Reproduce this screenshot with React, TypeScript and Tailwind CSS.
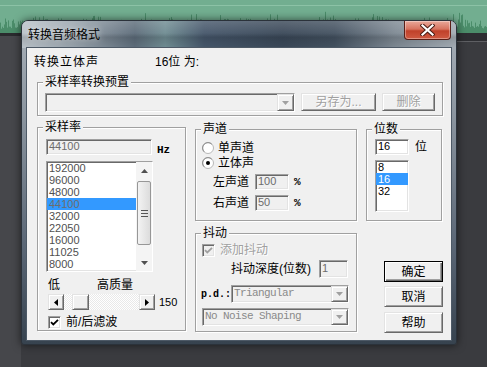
import React from 'react';

const SUNKEN =
  'border border-t-[#a0a0a0] border-l-[#a0a0a0] border-r-white border-b-white shadow-[inset_1px_1px_0_#696969,inset_-1px_-1px_0_#e3e3e3]';
const RAISED =
  'border border-t-[#e3e3e3] border-l-[#e3e3e3] border-r-[#696969] border-b-[#696969] shadow-[inset_1px_1px_0_#fff,inset_-1px_-1px_0_#a0a0a0]';
const MONO = "font-['Liberation_Mono',monospace]";

type Dir = 'up' | 'down' | 'left' | 'right';

const Arrow = ({ dir, color = '#000' }: { dir: Dir; color?: string }) => {
  const paths: Record<Dir, string> = {
    down: 'M0 0H7L3.5 4Z',
    up: 'M0 4H7L3.5 0Z',
    left: 'M4 0V7L0 3.5Z',
    right: 'M0 0V7L4 3.5Z',
  };
  const flat = dir === 'up' || dir === 'down';
  const w = flat ? 7 : 4;
  const h = flat ? 4 : 7;
  return (
    <svg width={w} height={h} viewBox={`0 0 ${w} ${h}`}>
      <path d={paths[dir]} fill={color} />
    </svg>
  );
};

const Group = ({
  label,
  className,
  children,
}: {
  label: string;
  className: string;
  children?: React.ReactNode;
}) => (
  <div className={`relative border border-[#a0a0a0] shadow-[inset_1px_1px_0_#fff,1px_1px_0_#fff] ${className}`}>
    <span className="absolute left-[5px] top-[-8px] bg-[#f0f0f0] px-[2px] text-[12px] leading-[14px]">{label}</span>
    {children}
  </div>
);

const Combo = ({ text, className }: { text?: string; className: string }) => (
  <div className={`${SUNKEN} flex items-stretch bg-[#f0f0f0] ${className}`}>
    <div className={`flex-1 pl-[2px] text-[11px] leading-[14px] tracking-[-0.6px] text-[#8a8a8a] ${MONO}`}>{text}</div>
    <div className={`${RAISED} flex w-[17px] items-center justify-center bg-[#f0f0f0]`}>
      <Arrow dir="down" color="#a0a0a0" />
    </div>
  </div>
);

const Edit = ({ text, className, enabled }: { text: string; className: string; enabled?: boolean }) => (
  <div
    className={`${SUNKEN} pl-[2px] text-[11px] leading-[13px] ${
      enabled ? 'bg-white text-black' : 'bg-[#f0f0f0] text-[#6d6d6d]'
    } ${className}`}
  >
    {text}
  </div>
);

const Check = ({ disabled }: { disabled?: boolean }) => (
  <div
    className={`${SUNKEN} flex h-[13px] w-[13px] shrink-0 items-center justify-center ${
      disabled ? 'bg-[#f0f0f0]' : 'bg-white'
    }`}
  >
    <svg width="9" height="9" viewBox="0 0 9 9">
      <path d="M1 4.2L3.3 6.5L8 1.8" stroke={disabled ? '#a0a0a0' : '#000'} strokeWidth="1.8" fill="none" />
    </svg>
  </div>
);

const Radio = ({ on }: { on?: boolean }) => (
  <svg width="12" height="12" viewBox="0 0 12 12" className="shrink-0">
    <circle cx="6" cy="6" r="5.5" fill="#fff" stroke="#b8b8b8" />
    <path d="M2.2 9.8A5.3 5.3 0 0 1 9.8 2.2" stroke="#8a8a8a" fill="none" />
    {on && <circle cx="6" cy="6" r="2" fill="#000" />}
  </svg>
);

const ScrollBar = () => (
  <div className="flex w-[16px] flex-col bg-[#f4f4f4]">
    <div className="flex h-[17px] items-center justify-center">
      <Arrow dir="up" color="#505050" />
    </div>
    <div className="mx-[1px] mt-[2px] flex h-[64px] flex-col items-center justify-center gap-[2px] rounded-[2px] border border-[#979797] bg-[linear-gradient(90deg,#f3f3f3,#dcdcdc)]">
      <div className="h-px w-[7px] bg-[#555]" />
      <div className="h-px w-[7px] bg-[#555]" />
      <div className="h-px w-[7px] bg-[#555]" />
    </div>
    <div className="flex-1" />
    <div className="flex h-[17px] items-center justify-center">
      <Arrow dir="down" color="#505050" />
    </div>
  </div>
);

const rates = ['192000', '96000', '48000', '44100', '32000', '22050', '16000', '11025', '8000'];
const bits = ['8', '16', '32'];

const Button = ({ label, disabled, primary, className }: { label: string; disabled?: boolean; primary?: boolean; className: string }) => (
  <div
    className={`flex items-center justify-center bg-[#f0f0f0] text-[12px] leading-[14px] ${
      primary
        ? 'border border-black shadow-[inset_1px_1px_0_#fff,inset_-1px_-1px_0_#696969,inset_-2px_-2px_0_#a0a0a0]'
        : RAISED
    } ${disabled ? 'text-[#a0a0a0] [text-shadow:1px_1px_0_#fff]' : 'text-black'} ${className}`}
  >
    {label}
  </div>
);

const Wave = () => {
  let seed = 11;
  const rnd = () => {
    seed = (seed * 9301 + 49297) % 233280;
    return seed / 233280;
  };
  let d = '';
  for (let x = 0; x < 487; x++) {
    const env = Math.abs(Math.sin(x / 19) * 0.6 + Math.sin(x / 5.3) * 0.4);
    const h = rnd() < 0.3 ? 4 + rnd() * 3 : 5 + rnd() * 17 * (0.35 + 0.65 * env);
    d += `M${x + 0.5} 33V${(33 - h).toFixed(1)}`;
  }
  return (
    <svg width="487" height="33" viewBox="0 0 487 33" className="block">
      <rect x="0" y="5" width="487" height="1" fill="#8cc2a6" />
      <path d={d} stroke="#4b8d6a" strokeWidth="1" />
    </svg>
  );
};

export default function App() {
  return (
    <div className="relative flex h-[367px] w-[487px] flex-col overflow-hidden bg-[#3c3d41] font-['Liberation_Sans','Noto_Sans_CJK_SC',sans-serif] text-black">
      {/* desktop behind the dialog */}
      <div className="h-[33px] bg-[#72ae90]">
        <Wave />
      </div>
      <div className="flex flex-1">
        <div className="w-[21px] border-t-[3px] border-[#2a2b2e] bg-[#46474b]" />
        <div className="flex flex-1 flex-col">
          <div className="h-[8px] bg-[#2d2e32]" />
          <div className="h-px bg-[#5e5f63]" />
          <div className="flex-1 bg-[#3a3b3f]" />
        </div>
      </div>

      {/* dialog window */}
      <div className="absolute left-[21px] top-[20px] flex h-[325px] w-[436px] flex-col rounded-t-[7px] rounded-b-[3px] border border-[#2b323a] bg-[linear-gradient(180deg,#a9b1b9_0%,#8a949e_30%,#5a6675_70%,#37434f_100%)] shadow-[0_0_8px_rgba(0,0,0,0.6)]">
        <div className="flex h-[27px] items-start justify-between rounded-t-[6px] bg-[image:linear-gradient(180deg,rgba(255,255,255,0.18)_0%,rgba(255,255,255,0.05)_45%,rgba(0,0,0,0.12)_60%,rgba(0,0,0,0)_100%),linear-gradient(90deg,#bac2c9_0%,#97a2ab_12%,#5d6c7a_26%,#6f8c92_33%,#45566a_42%,#3a4858_60%,#435160_72%,#7e8993_86%,#a3acb4_100%)]">
          <div className="pl-[6px] pt-[7px] text-[12px] leading-[14px] [text-shadow:0_0_6px_rgba(255,255,255,0.9)]">转换音频格式</div>
          <div className="mr-[5px] flex h-[19px] w-[47px] items-center justify-center rounded-b-[4px] border border-t-0 border-[#5a1f17] bg-[linear-gradient(180deg,#e9a89a_0%,#d7735f_45%,#c0412a_55%,#cf5a42_100%)] shadow-[inset_0_0_0_1px_rgba(255,255,255,0.35)]">
            <svg width="15" height="12" viewBox="0 0 15 12">
              <path d="M2.5 1.5L12.5 10.5M12.5 1.5L2.5 10.5" stroke="#4a1c14" strokeWidth="4.2" strokeLinecap="square" />
              <path d="M2.5 1.5L12.5 10.5M12.5 1.5L2.5 10.5" stroke="#fff" strokeWidth="2.2" strokeLinecap="square" />
            </svg>
          </div>
        </div>

        <div className="mx-[5px] h-[292px] bg-[#f0f0f0] pt-[7px] shadow-[0_0_0_1px_#4d5966]">
          <div className="flex h-[14px] pl-[7px] text-[12px] leading-[14px]">
            <span className="w-[121px] tracking-[1px]">转换立体声</span>
            <span>16位 为:</span>
          </div>

          <Group label="采样率转换预置" className="ml-[10px] mt-[13px] h-[34px] w-[406px]">
            <div className="flex gap-[6px] pl-[7px] pt-[10px]">
              <Combo className="h-[19px] w-[250px]" />
              <Button label="另存为..." disabled className="h-[18px] w-[75px]" />
              <Button label="删除" disabled className="h-[18px] w-[53px]" />
            </div>
          </Group>

          <div className="mt-[11px] flex items-start pl-[10px]">
            {/* sample rate */}
            <Group label="采样率" className="h-[204px] w-[149px]">
              <div className="ml-[8px] mt-[11px] flex h-[16px] items-center">
                <Edit text="44100" className="h-[16px] w-[106px]" />
                <span className={`ml-[5px] translate-y-[3px] text-[11px] font-bold leading-[13px] ${MONO}`}>Hz</span>
              </div>
              <div className={`${SUNKEN} ml-[8px] mt-[6px] flex h-[111px] w-[107px] bg-white`}>
                <div className="flex-1">
                  {rates.map((r, i) => (
                    <div
                      key={r}
                      className={`h-[12px] pl-[2px] text-[11px] leading-[12px] ${
                        i === 3 ? 'bg-[#3399ff] text-[#6d6d6d]' : 'text-[#505050]'
                      }`}
                    >
                      {r}
                    </div>
                  ))}
                </div>
                <ScrollBar />
              </div>
              <div className="mt-[6px] flex h-[14px] pl-[10px] text-[12px] leading-[14px]">
                <span className="w-[49px]">低</span>
                <span>高质量</span>
              </div>
              <div className="ml-[10px] mt-[2px] flex h-[16px] items-center">
                <div className={`${RAISED} flex h-[16px] w-[16px] items-center justify-center bg-[#f0f0f0]`}>
                  <Arrow dir="left" />
                </div>
                <div className="flex h-[16px] w-[75px] bg-[image:repeating-conic-gradient(#fff_0_25%,#e9e9e9_0_50%)] bg-[length:2px_2px]">
                  <div className={`${RAISED} ml-[8px] h-[16px] w-[17px] bg-[#f0f0f0]`} />
                </div>
                <div className={`${RAISED} flex h-[16px] w-[16px] items-center justify-center bg-[#f0f0f0]`}>
                  <Arrow dir="right" />
                </div>
                <span className="ml-[4px] text-[11px] leading-[13px]">150</span>
              </div>
              <div className="ml-[10px] mt-[5px] flex items-center">
                <Check />
                <span className="ml-[5px] text-[12px] leading-[14px]">前/后滤波</span>
              </div>
            </Group>

            {/* channels + dither */}
            <div className="ml-[9px] flex w-[162px] flex-col">
              <Group label="声道" className="mt-[2px] h-[92px]">
                <div className="mt-[11px] flex h-[14px] items-center gap-[4px] pl-[6px] text-[12px] leading-[14px]">
                  <Radio />
                  <span>单声道</span>
                </div>
                <div className="mt-[1px] flex h-[14px] items-center gap-[4px] pl-[6px] text-[12px] leading-[14px]">
                  <Radio on />
                  <span>立体声</span>
                </div>
                <div className="mt-[4px] flex h-[16px] items-center pl-[17px] text-[12px] leading-[14px]">
                  <span className="w-[42px]">左声道</span>
                  <Edit text="100" className="h-[16px] w-[34px]" />
                  <span className={`ml-[5px] text-[11px] font-bold ${MONO}`}>%</span>
                </div>
                <div className="mt-[5px] flex h-[16px] items-center pl-[17px] text-[12px] leading-[14px]">
                  <span className="w-[42px]">右声道</span>
                  <Edit text="50" className="h-[16px] w-[34px]" />
                  <span className={`ml-[5px] text-[11px] font-bold ${MONO}`}>%</span>
                </div>
              </Group>

              <Group label="抖动" className="mt-[12px] h-[99px]">
                <div className="mt-[9px] flex items-center pl-[6px]">
                  <Check disabled />
                  <span className="ml-[5px] text-[12px] leading-[14px] text-[#a0a0a0] [text-shadow:1px_1px_0_#fff]">添加抖动</span>
                </div>
                <div className="mt-[3px] flex h-[18px] items-center pl-[35px]">
                  <span className="w-[88px] text-[12px] leading-[14px]">抖动深度(位数)</span>
                  <Edit text="1" className="h-[18px] w-[29px] leading-[15px]" />
                </div>
                <div className="mt-[7px] flex h-[18px] items-center pl-[5px]">
                  <span className={`w-[30px] text-[10px] font-bold ${MONO}`}>p.d.:</span>
                  <Combo text="Triangular" className="h-[18px] w-[118px]" />
                </div>
                <div className="mt-[5px] pl-[6px]">
                  <Combo text="No Noise Shaping" className="h-[18px] w-[147px]" />
                </div>
              </Group>
            </div>

            {/* bit depth + buttons */}
            <div className="ml-[9px] flex w-[77px] flex-col">
              <Group label="位数" className="mt-[2px] h-[92px] w-[76px]">
                <div className="ml-[8px] mt-[9px] flex items-center">
                  <Edit text="16" enabled className="h-[16px] w-[34px]" />
                  <span className="ml-[6px] text-[12px] leading-[14px]">位</span>
                </div>
                <div className={`${SUNKEN} ml-[8px] mt-[5px] h-[52px] w-[34px] bg-white`}>
                  {bits.map((b, i) => (
                    <div
                      key={b}
                      className={`h-[12px] pl-[2px] text-[11px] leading-[12px] ${
                        i === 1 ? 'bg-[#3399ff] text-white' : 'text-black'
                      }`}
                    >
                      {b}
                    </div>
                  ))}
                </div>
              </Group>
              <div className="mt-[40px] flex flex-col pl-[18px]">
                <Button label="确定" primary className="h-[21px] w-[59px]" />
                <Button label="取消" className="mt-[4px] h-[21px] w-[59px]" />
                <Button label="帮助" className="mt-[5px] h-[21px] w-[59px]" />
              </div>
            </div>
          </div>
        </div>
      </div>
    </div>
  );
}
